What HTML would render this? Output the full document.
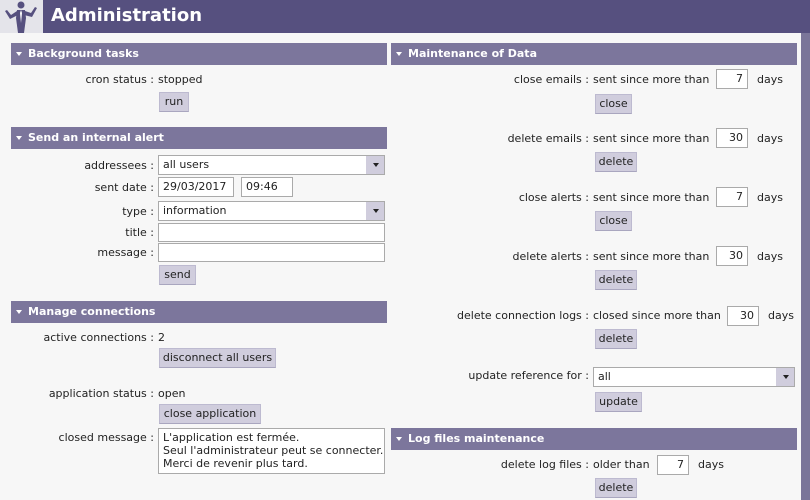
<!DOCTYPE html>
<html><head><meta charset="utf-8"><style>
*{margin:0;padding:0;box-sizing:border-box}
body{width:810px;height:500px;overflow:hidden;background:#f7f7f7;font-family:"DejaVu Sans","Liberation Sans",sans-serif;font-size:11px;color:#222;position:relative}
.a{position:absolute;white-space:nowrap;line-height:14px;margin-top:1px}
.top{position:absolute;left:0;top:0;width:810px;height:33px;background:#56507f}
.ico{position:absolute;left:0;top:0;width:43px;height:33px;background:#e4e4ea}
.title{position:absolute;left:51px;top:5px;color:#fff;font-weight:bold;font-size:18px;font-family:"DejaVu Sans",sans-serif}
.rbar{position:absolute;left:801px;top:33px;width:9px;height:467px;background:#7a7599}
.h{position:absolute;height:22px;background:#7c769c;color:#fff;font-weight:bold;font-size:11px;line-height:22px;padding-left:17px}
.h:before{content:"";position:absolute;left:5px;top:9px;border-left:3.5px solid transparent;border-right:3.5px solid transparent;border-top:4px solid #fff}
.lr{position:absolute;text-align:right;line-height:14px;white-space:nowrap;margin-top:1px}
.b{position:absolute;height:20px;background:#d0cddd;border:1px solid #bdbad0;border-bottom-color:#a9a6bf;line-height:18px;text-align:center;color:#222}
.i{position:absolute;height:20px;background:#fff;border:1px solid #aaa;line-height:18px;padding:0 4px;color:#222}
.s{position:absolute;height:20px;background:#fff;border:1px solid #aaa;line-height:18px;padding:0 4px}
.s:after{content:"";position:absolute;right:0;top:0;width:18px;height:18px;background:#d0cddd}
.s span{position:absolute;right:5px;top:7px;z-index:2;border-left:3.5px solid transparent;border-right:3.5px solid transparent;border-top:4px solid #222}
.n{text-align:right}
</style></head><body>
<div class="top"></div>
<div class="ico"><svg width="43" height="33" viewBox="0 0 43 33"><g fill="#56507f"><circle cx="21" cy="5" r="3.5"/><path d="M17 10h8l1 8-2 15h-6l-2-15z"/><path d="M17 11l-6 4-4-5-2 1 5 8 8-4z"/><path d="M25 11l6 2 4-6 2 1-5 9-8-2z"/></g><path d="M21 10l-1 3 1 10 1-10z" fill="#fff"/></svg></div>
<div class="title">Administration</div>
<div class="rbar"></div>

<div class="h" style="left:11px;top:43px;width:376px">Background tasks</div>
<div class="h" style="left:391px;top:43px;width:406px">Maintenance of Data</div>
<div class="h" style="left:11px;top:127px;width:376px">Send an internal alert</div>
<div class="h" style="left:11px;top:301px;width:376px">Manage connections</div>
<div class="h" style="left:391px;top:428px;width:406px">Log files maintenance</div>

<div class="lr" style="right:656px;top:72px">cron status :</div><div class="a" style="left:158px;top:72px">stopped</div>
<div class="b" style="left:159px;top:92px;width:30px">run</div>

<div class="lr" style="right:656px;top:158px">addressees :</div>
<div class="s" style="left:158px;top:155px;width:227px">all users<span></span></div>
<div class="lr" style="right:656px;top:180px">sent date :</div>
<div class="i" style="left:158px;top:177px;width:76px">29/03/2017</div>
<div class="i" style="left:241px;top:177px;width:52px">09:46</div>
<div class="lr" style="right:656px;top:204px">type :</div>
<div class="s" style="left:158px;top:201px;width:227px">information<span></span></div>
<div class="lr" style="right:656px;top:225px">title :</div>
<div class="i" style="left:158px;top:223px;width:227px;height:19px"></div>
<div class="lr" style="right:656px;top:245px">message :</div>
<div class="i" style="left:158px;top:243px;width:227px;height:19px"></div>
<div class="b" style="left:159px;top:265px;width:37px">send</div>

<div class="lr" style="right:656px;top:330px">active connections :</div><div class="a" style="left:158px;top:330px">2</div>
<div class="b" style="left:159px;top:348px;width:117px">disconnect all users</div>
<div class="lr" style="right:656px;top:386px">application status :</div><div class="a" style="left:158px;top:386px">open</div>
<div class="b" style="left:159px;top:404px;width:102px">close application</div>
<div class="lr" style="right:656px;top:430px">closed message :</div>
<div class="i" style="left:158px;top:428px;width:227px;height:46px;line-height:13px;padding-top:2px;white-space:nowrap">L'application est fermée.<br>Seul l'administrateur peut se connecter.<br>Merci de revenir plus tard.</div>

<div class="lr" style="right:221px;top:72px">close emails :</div><div class="a" style="left:593px;top:72px">sent since more than</div>
<div class="i n" style="left:716px;top:69px;width:32px">7</div><div class="a" style="left:757px;top:72px">days</div>
<div class="b" style="left:595px;top:94px;width:37px">close</div>

<div class="lr" style="right:221px;top:131px">delete emails :</div><div class="a" style="left:593px;top:131px">sent since more than</div>
<div class="i n" style="left:716px;top:128px;width:32px">30</div><div class="a" style="left:757px;top:131px">days</div>
<div class="b" style="left:595px;top:152px;width:42px">delete</div>

<div class="lr" style="right:221px;top:190px">close alerts :</div><div class="a" style="left:593px;top:190px">sent since more than</div>
<div class="i n" style="left:716px;top:187px;width:32px">7</div><div class="a" style="left:757px;top:190px">days</div>
<div class="b" style="left:595px;top:211px;width:37px">close</div>

<div class="lr" style="right:221px;top:249px">delete alerts :</div><div class="a" style="left:593px;top:249px">sent since more than</div>
<div class="i n" style="left:716px;top:246px;width:32px">30</div><div class="a" style="left:757px;top:249px">days</div>
<div class="b" style="left:595px;top:270px;width:42px">delete</div>

<div class="lr" style="right:221px;top:308px">delete connection logs :</div><div class="a" style="left:593px;top:308px">closed since more than</div>
<div class="i n" style="left:727px;top:306px;width:32px">30</div><div class="a" style="left:768px;top:308px">days</div>
<div class="b" style="left:595px;top:329px;width:42px">delete</div>

<div class="lr" style="right:221px;top:368px">update reference for :</div>
<div class="s" style="left:593px;top:367px;width:202px">all<span></span></div>
<div class="b" style="left:595px;top:392px;width:47px">update</div>

<div class="lr" style="right:221px;top:457px">delete log files :</div><div class="a" style="left:593px;top:457px">older than</div>
<div class="i n" style="left:657px;top:455px;width:32px">7</div><div class="a" style="left:698px;top:457px">days</div>
<div class="b" style="left:595px;top:478px;width:42px">delete</div>
</body></html>
